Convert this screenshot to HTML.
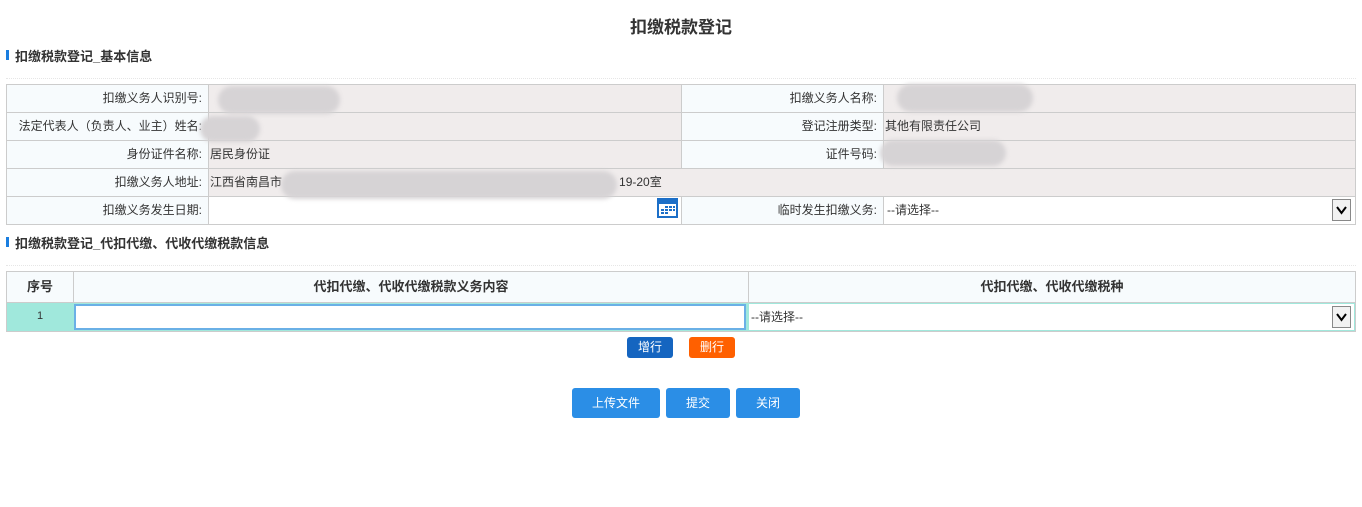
<!DOCTYPE html>
<html><head><meta charset="utf-8"><style>
*{margin:0;padding:0;box-sizing:border-box}
body{width:1362px;height:507px;background:#fff;font-family:"Liberation Sans","Noto Sans CJK SC",sans-serif;font-size:12px;color:#333;position:relative;overflow:hidden}
.a{position:absolute}
.t{position:absolute;white-space:nowrap}
.lbl{background:#f7fbfd;border:1px solid #ccc;text-align:right;padding-right:6px;line-height:27px}
.val{background:#f0ecec;border:1px solid #ccc;line-height:27px;padding-left:1px}
.blur{position:absolute;background:#d6d3d5;border-radius:14px;filter:blur(2px)}
.btn{position:absolute;color:#fff;text-align:center;border-radius:3px}
.sel{position:absolute;border:1px solid #888;width:19px;height:22px;background:#f2f2f2}
</style></head><body>
<div class="t" style="left:0;width:1362px;text-align:center;top:13px;font-size:17px;font-weight:bold;color:#333">扣缴税款登记</div>
<div class="a" style="left:6px;top:50px;width:3px;height:10px;background:#1a7ee0"></div>
<div class="t" style="left:15px;top:46px;font-weight:bold;font-size:13px">扣缴税款登记_基本信息</div>
<div class="a" style="left:6px;top:78px;width:1350px;border-top:1px dotted #e6e6e6"></div>

<div class="a lbl" style="left:6px;top:84px;width:203px;height:29px">扣缴义务人识别号:</div>
<div class="a val" style="left:208px;top:84px;width:474px;height:29px"></div>
<div class="a lbl" style="left:681px;top:84px;width:203px;height:29px">扣缴义务人名称:</div>
<div class="a val" style="left:883px;top:84px;width:473px;height:29px"></div>

<div class="a lbl" style="left:6px;top:112px;width:203px;height:29px">法定代表人（负责人、业主）姓名:</div>
<div class="a val" style="left:208px;top:112px;width:474px;height:29px"></div>
<div class="a lbl" style="left:681px;top:112px;width:203px;height:29px">登记注册类型:</div>
<div class="a val" style="left:883px;top:112px;width:473px;height:29px">其他有限责任公司</div>

<div class="a lbl" style="left:6px;top:140px;width:203px;height:29px">身份证件名称:</div>
<div class="a val" style="left:208px;top:140px;width:474px;height:29px">居民身份证</div>
<div class="a lbl" style="left:681px;top:140px;width:203px;height:29px">证件号码:</div>
<div class="a val" style="left:883px;top:140px;width:473px;height:29px"></div>

<div class="a lbl" style="left:6px;top:168px;width:203px;height:29px">扣缴义务人地址:</div>
<div class="a val" style="left:208px;top:168px;width:1148px;height:29px">江西省南昌市<span style="margin-left:337px">19-20室</span></div>

<div class="a lbl" style="left:6px;top:196px;width:203px;height:29px">扣缴义务发生日期:</div>
<div class="a" style="left:208px;top:196px;width:474px;height:29px;border:1px solid #ccc;background:#fff"></div>
<div class="a lbl" style="left:681px;top:196px;width:203px;height:29px">临时发生扣缴义务:</div>
<div class="a" style="left:883px;top:196px;width:473px;height:29px;border:1px solid #ccc;background:#fff;line-height:27px;padding-left:3px">--请选择--</div>
<div class="sel" style="left:1332px;top:199px"><svg width="17" height="20"><path d="M4 7 L8.5 13 L13 7" fill="none" stroke="#000" stroke-width="2"/></svg></div>
<svg class="a" style="left:657px;top:198px" width="22" height="20"><rect x="0" y="0" width="21" height="20" fill="#1c6fc8"/><rect x="2" y="6" width="17" height="12" fill="#fff"/><g fill="#1c6fc8"><rect x="8" y="8" width="3" height="2"/><rect x="12" y="8" width="3" height="2"/><rect x="16" y="8" width="2" height="2"/><rect x="4" y="11" width="3" height="2"/><rect x="8" y="11" width="3" height="2"/><rect x="12" y="11" width="3" height="2"/><rect x="16" y="11" width="2" height="2"/><rect x="4" y="14" width="3" height="2"/><rect x="8" y="14" width="3" height="2"/></g></svg>

<div class="blur" style="left:218px;top:86px;width:122px;height:28px"></div>
<div class="blur" style="left:200px;top:116px;width:60px;height:26px"></div>
<div class="blur" style="left:897px;top:84px;width:136px;height:28px"></div>
<div class="blur" style="left:880px;top:140px;width:126px;height:26px"></div>
<div class="blur" style="left:281px;top:171px;width:336px;height:28px"></div>

<div class="a" style="left:6px;top:237px;width:3px;height:10px;background:#1a7ee0"></div>
<div class="t" style="left:15px;top:233px;font-weight:bold;font-size:13px">扣缴税款登记_代扣代缴、代收代缴税款信息</div>
<div class="a" style="left:6px;top:265px;width:1350px;border-top:1px dotted #e6e6e6"></div>

<div class="a" style="left:6px;top:271px;width:68px;height:32px;border:1px solid #ccc;background:#f7fbfd;text-align:center;line-height:30px;font-weight:bold;font-size:13px">序号</div>
<div class="a" style="left:73px;top:271px;width:676px;height:32px;border:1px solid #ccc;background:#f7fbfd;text-align:center;line-height:30px;font-weight:bold;font-size:13px">代扣代缴、代收代缴税款义务内容</div>
<div class="a" style="left:748px;top:271px;width:608px;height:32px;border:1px solid #ccc;background:#f7fbfd;text-align:center;line-height:30px;font-weight:bold;font-size:13px">代扣代缴、代收代缴税种</div>
<div class="a" style="left:6px;top:302px;width:1350px;height:30px;border:1px solid #ccc;background:#a0e8dc"></div>
<div class="t" style="left:6px;width:68px;top:310px;text-align:center;font-size:11px">1</div>
<div class="a" style="left:74px;top:304px;width:672px;height:26px;border:2px solid #6ab0e6;background:#fff"></div>
<div class="a" style="left:749px;top:304px;width:605px;height:26px;background:#fff;line-height:26px;padding-left:2px">--请选择--</div>
<div class="sel" style="left:1332px;top:306px"><svg width="17" height="20"><path d="M4 7 L8.5 13 L13 7" fill="none" stroke="#000" stroke-width="2"/></svg></div>

<div class="btn" style="left:627px;top:337px;width:46px;height:21px;background:#1565c0;line-height:21px">增行</div>
<div class="btn" style="left:689px;top:337px;width:46px;height:21px;background:#ff6000;line-height:21px">删行</div>

<div class="btn" style="left:572px;top:388px;width:88px;height:30px;background:#2b8ee6;line-height:30px">上传文件</div>
<div class="btn" style="left:666px;top:388px;width:64px;height:30px;background:#2b8ee6;line-height:30px">提交</div>
<div class="btn" style="left:736px;top:388px;width:64px;height:30px;background:#2b8ee6;line-height:30px">关闭</div>
</body></html>
